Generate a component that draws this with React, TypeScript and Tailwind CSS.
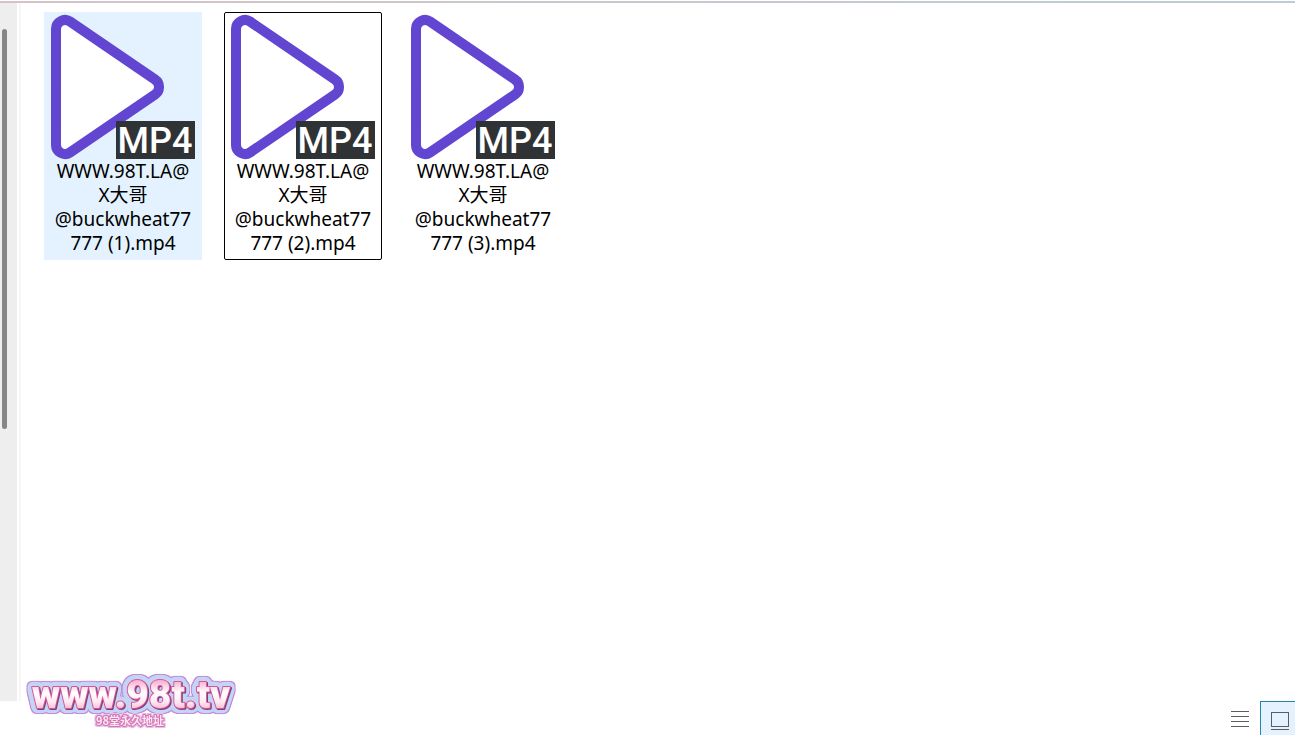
import React, { useState } from 'react';

interface VideoFile {
  id: number;
  // Name is broken by hand, the long words have no natural wrap points
  lines: string[];
}

const FILES: VideoFile[] = [1, 2, 3].map((n) => ({
  id: n,
  lines: ['WWW.98T.LA@', 'X大哥', '@buckwheat77', `777 (${n}).mp4`],
}));

const Mp4Icon: React.FC = () => (
  <svg viewBox="0 0 144 144" className="block h-36 w-36 overflow-visible" aria-hidden="true">
    <path
      d="M5 14A9 9 0 0 1 19 6.5L104 64.5A9 9 0 0 1 104 79.5L19 137.5A9 9 0 0 1 5 130Z"
      fill="#fff"
      stroke="#6246d2"
      strokeWidth="10"
    />
    <rect x="65" y="106" width="79" height="38" fill="#2f3335" />
    <text x="104" y="138" textAnchor="middle" fontSize="36" fontWeight="500" fill="#fff" fontFamily="Roboto, sans-serif">
      MP4
    </text>
  </svg>
);

interface TileProps {
  file: VideoFile;
  hovered: boolean;
  focused: boolean;
  onSelect: () => void;
}

const FileTile: React.FC<TileProps> = ({ file, hovered, focused, onSelect }) => (
  <button
    type="button"
    onClick={onSelect}
    className={`flex w-[158px] flex-col items-center border px-1 pt-0.5 pb-1 outline-none ${
      focused ? 'rounded-xs border-black bg-white' : hovered ? 'border-transparent bg-[#e3f2fe]' : 'border-transparent'
    }`}
  >
    <Mp4Icon />
    <span className="block text-center text-[19px] leading-6 whitespace-nowrap text-black">
      {file.lines.map((line) => (
        <span key={line} className="block">{line}</span>
      ))}
    </span>
  </button>
);

// Sticker style logo, the outlines are grown from the letters by the filters
const Watermark: React.FC = () => (
  <svg viewBox="0 0 220 60" className="pointer-events-none absolute bottom-1 left-5 h-[60px] w-[220px] overflow-visible">
    <defs>
      <linearGradient id="letters" x1="0" y1="0" x2="0" y2="1">
        <stop offset="0.2" stopColor="#f9b4d2" />
        <stop offset="0.45" stopColor="#ffffff" />
        <stop offset="0.65" stopColor="#ffe9f1" />
        <stop offset="0.82" stopColor="#f9b9d5" />
      </linearGradient>
      <filter id="sticker" x="-10%" y="-30%" width="120%" height="160%" colorInterpolationFilters="sRGB">
        <feGaussianBlur in="SourceAlpha" stdDeviation="2" result="soft" />
        <feComponentTransfer in="soft" result="wide">
          <feFuncA type="linear" slope="20" intercept="-0.8" />
        </feComponentTransfer>
        <feMorphology in="wide" operator="dilate" radius="2" result="rim" />
        <feMorphology in="wide" operator="dilate" radius="1" result="body" />
        <feFlood floodColor="#c58bdb" />
        <feComposite in2="rim" operator="in" result="rimColor" />
        <feFlood floodColor="#c3d4f5" />
        <feComposite in2="body" operator="in" result="bodyColor" />
        <feOffset in="SourceAlpha" dx="1" dy="1" result="shade" />
        <feFlood floodColor="#7d3f78" />
        <feComposite in2="shade" operator="in" result="shadeColor" />
        <feMerge>
          <feMergeNode in="rimColor" />
          <feMergeNode in="bodyColor" />
          <feMergeNode in="shadeColor" />
          <feMergeNode in="SourceGraphic" />
        </feMerge>
      </filter>
      <filter id="halo" x="-10%" y="-30%" width="120%" height="160%" colorInterpolationFilters="sRGB">
        <feMorphology in="SourceAlpha" operator="dilate" radius="1" result="grown" />
        <feFlood floodColor="#e6bfe6" />
        <feComposite in2="grown" operator="in" result="grownColor" />
        <feMerge>
          <feMergeNode in="grownColor" />
          <feMergeNode in="SourceGraphic" />
        </feMerge>
      </filter>
    </defs>
    <text
      x="111"
      y="37"
      textAnchor="middle"
      fontFamily="Roboto, sans-serif"
      fontSize="39"
      fontWeight="900"
      fill="url(#letters)"
      stroke="#d8579a"
      strokeWidth="2"
      strokeLinejoin="round"
      paintOrder="stroke"
      filter="url(#sticker)"
    >
      www.98t.tv
    </text>
    <text
      x="110"
      y="54"
      textAnchor="middle"
      fontFamily="Noto Sans CJK SC, sans-serif"
      fontSize="11"
      fontWeight="700"
      fill="#ffe6f2"
      stroke="#d274b4"
      strokeWidth="2"
      strokeLinejoin="round"
      paintOrder="stroke"
      filter="url(#halo)"
    >
      98堂永久地址
    </text>
  </svg>
);

export default function App() {
  const [focusedId, setFocusedId] = useState(2);
  const [view, setView] = useState<'details' | 'large'>('large');

  return (
    <div className="relative flex h-screen flex-col overflow-hidden bg-white pt-px font-['Noto_Sans','Noto_Sans_CJK_SC',sans-serif]">
      <div className="h-0.5 shrink-0 bg-linear-to-r from-[#d5c2ca] to-[#bccdd3]" />

      <div className="flex min-h-0 flex-1">
        {/* Navigation pane edge with its scrollbar */}
        <aside className="w-[17px] shrink-0 bg-[#eeeeee] pt-[26px] pl-0.5">
          <div className="h-[400px] w-[5px] rounded-full bg-[#868686]" />
        </aside>
        <div className="ml-0.5 w-0.5 shrink-0 bg-[#f6f6f6]" />

        <main className="flex flex-1 flex-wrap content-start items-start gap-[22px] pt-[9px] pl-[23px]">
          {FILES.map((file) => (
            <FileTile
              key={file.id}
              file={file}
              hovered={file.id === 1}
              focused={file.id === focusedId}
              onSelect={() => setFocusedId(file.id)}
            />
          ))}
        </main>
      </div>

      {/* View switch */}
      <footer className="flex h-[34px] shrink-0 justify-end">
        <button
          type="button"
          aria-label="Details"
          onClick={() => setView('details')}
          className={`flex w-10 border-t border-l pt-2 pl-2.5 ${
            view === 'details' ? 'border-[#2585a8] bg-[#e3f2fe]' : 'border-transparent'
          }`}
        >
          <svg viewBox="0 0 18 18" className="h-[18px] w-[18px]" fill="none" stroke="#5a5d62" shapeRendering="crispEdges">
            <path d="M0 1.5H18M0 6.5H18M0 11.5H18M0 16.5H18" />
          </svg>
        </button>
        <button
          type="button"
          aria-label="Large icons"
          onClick={() => setView('large')}
          className={`flex w-[35px] border-t border-l pt-2 pl-2.5 ${
            view === 'large' ? 'border-[#2585a8] bg-[#e3f2fe]' : 'border-transparent'
          }`}
        >
          <svg viewBox="0 0 18 20" className="h-5 w-[18px] shrink-0" fill="none" stroke="#5a5d62" shapeRendering="crispEdges">
            <rect x="0.5" y="2.5" width="17" height="14" />
            <path d="M0 19.5H18" />
          </svg>
        </button>
      </footer>

      <Watermark />
    </div>
  );
}
